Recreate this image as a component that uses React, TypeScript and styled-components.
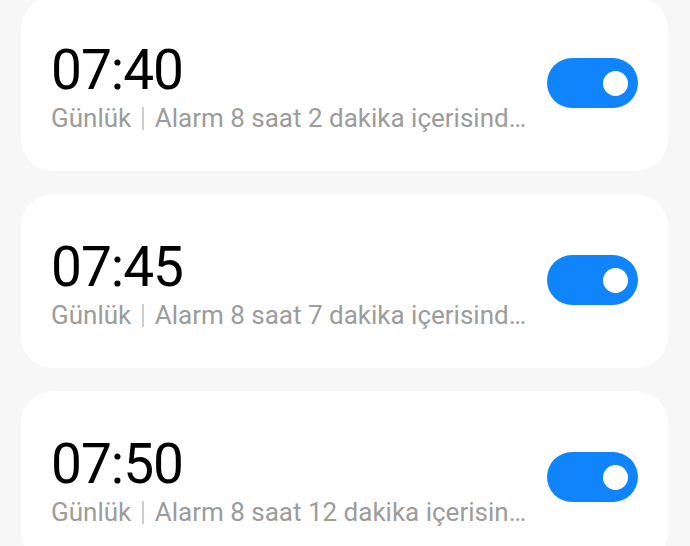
import styled, { createGlobalStyle } from 'styled-components';

const GlobalStyle = createGlobalStyle`
  html, body {
    margin: 0;
    padding: 0;
    background: #f7f7f7;
  }
  body {
    font-family: Roboto, "Noto Sans", sans-serif;
  }
`;

type Alarm = {
  time: string;
  repeat: string;
  note: string;
  on: boolean;
};

const alarms: Alarm[] = [
  { time: '07:40', repeat: 'Günlük', note: 'Alarm 8 saat 2 dakika içerisind…', on: true },
  { time: '07:45', repeat: 'Günlük', note: 'Alarm 8 saat 7 dakika içerisind…', on: true },
  { time: '07:50', repeat: 'Günlük', note: 'Alarm 8 saat 12 dakika içerisin…', on: true },
];

export default function App() {
  return (
    <>
      <GlobalStyle />
      <Screen>
        <List>
          {alarms.map((a) => (
            <Card key={a.time}>
              <Info>
                <Time>{a.time}</Time>
                <Sub>
                  {a.repeat}
                  <Divider />
                  {a.note}
                </Sub>
              </Info>
              <Toggle $on={a.on}>
                <Knob />
              </Toggle>
            </Card>
          ))}
        </List>
      </Screen>
    </>
  );
}

const Screen = styled.main`
  width: 690px;
  height: 546px;
  overflow: hidden;
  background: #f7f7f7;
`;

const List = styled.div`
  display: flex;
  flex-direction: column;
  gap: 23px;
  margin-top: -3px;
  padding: 0 22px 0 21px;
`;

const Card = styled.section`
  height: 174px;
  box-sizing: border-box;
  background: #ffffff;
  border-radius: 32px;
  display: flex;
  align-items: center;
  justify-content: space-between;
  padding: 0 30px 0 30px;
`;

const Info = styled.div`
  display: flex;
  flex-direction: column;
  gap: 2px;
  margin-top: 5px;
`;

const Time = styled.div`
  font-size: 55px;
  line-height: 60px;
  color: #000;
  letter-spacing: -1px;
`;

const Sub = styled.div`
  display: flex;
  align-items: center;
  font-size: 26px;
  line-height: 32px;
  color: #9c9c9c;
  white-space: nowrap;
`;

const Divider = styled.span`
  display: inline-block;
  width: 1.5px;
  height: 23px;
  background: #cdcdcd;
  margin: 2px 11px 0 11px;
`;

const Toggle = styled.div<{ $on: boolean }>`
  width: 91px;
  height: 50px;
  border-radius: 25px;
  background: ${(p) => (p.$on ? '#0f84fb' : '#d8d8d8')};
  display: flex;
  align-items: center;
  justify-content: ${(p) => (p.$on ? 'flex-end' : 'flex-start')};
  padding: 0 10px;
  box-sizing: border-box;
  margin-top: -2px;
`;

const Knob = styled.div`
  width: 25px;
  height: 25px;
  border-radius: 50%;
  background: #ffffff;
`;
